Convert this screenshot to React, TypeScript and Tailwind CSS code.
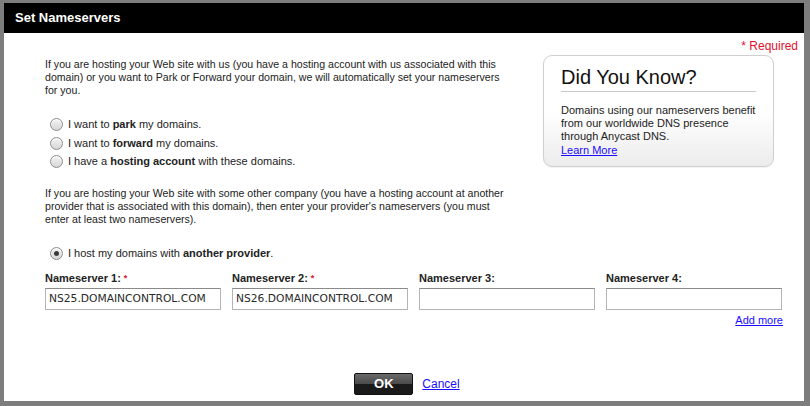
import React from "react";

function Radio({ checked = false }: { checked?: boolean }) {
  return (
    <span className="relative flex h-[13px] w-[13px] shrink-0 items-center justify-center rounded-full border border-[#8d8d8d] bg-gradient-to-b from-[#f4f4f4] to-[#d6d6d6] shadow-[inset_0_1px_1px_rgba(255,255,255,0.9)]">
      {checked && <span className="h-[5px] w-[5px] rounded-full bg-[#3a3a3a]" />}
    </span>
  );
}

function NsField({ label, required, value }: { label: string; required?: boolean; value?: string }) {
  return (
    <div className="flex w-[176px] flex-col">
      <div className="h-[16px] text-[11px] font-bold leading-[16px] text-[#222]">
        {label}
        {required && <span className="ml-[3px] align-top text-[9px] font-bold text-[#e0102d]">*</span>}
      </div>
      <div className="mt-[2px] flex h-[22px] items-center border border-[#b4b4b4] border-t-[#8a8a8a] bg-white px-[3px] text-[10.7px] font-['DejaVu_Sans',sans-serif] text-[#2a2a2a]">
        {value}
      </div>
    </div>
  );
}

export default function App() {
  return (
    <div className="relative h-[406px] w-[810px] overflow-hidden bg-[#7d7d7d] pl-[4px] pt-[3px] font-['Liberation_Sans',Arial,sans-serif]">
      <div className="flex h-[398px] w-[800px] flex-col bg-white">
        <div className="flex h-[30px] items-center bg-black px-[11px] text-[13px] font-bold text-white">
          Set Nameservers
        </div>
        <div className="flex flex-1 flex-col pr-[6px] pt-[6px]">
          <div className="h-[14px] text-right text-[12px] leading-[14px] text-[#e0102d]">* Required</div>
          <div className="mt-[2px] flex">
            <div className="w-[507px] pl-[41px] pt-[3px] text-[10.6px] leading-[13px] text-[#222]">
              <p>
                If you are hosting your Web site with us (you have a hosting account with us associated with this
                domain) or you want to Park or Forward your domain, we will automatically set your nameservers
                for you.
              </p>
              <div className="mt-[18px] flex flex-col pl-[5px] text-[11px]">
                <label className="flex h-[19px] items-center gap-[5px]">
                  <Radio />
                  <span>
                    I want to <b>park</b> my domains.
                  </span>
                </label>
                <label className="flex h-[18px] items-center gap-[5px]">
                  <Radio />
                  <span>
                    I want to <b>forward</b> my domains.
                  </span>
                </label>
                <label className="flex h-[19px] items-center gap-[5px]">
                  <Radio />
                  <span>
                    I have a <b>hosting account</b> with these domains.
                  </span>
                </label>
              </div>
              <p className="mt-[16px]">
                If you are hosting your Web site with some other company (you have a hosting account at another
                provider that is associated with this domain), then enter your provider's nameservers (you must
                enter at least two nameservers).
              </p>
              <label className="mt-[18px] flex h-[19px] items-center gap-[5px] pl-[5px] text-[11px]">
                <Radio checked />
                <span>
                  I host my domains with <b>another provider</b>.
                </span>
              </label>
            </div>
            <div className="ml-[32px] h-[112px] w-[231px] rounded-[9px] border border-[#cfcfcf] bg-gradient-to-b from-white via-white to-[#ececec] px-[17px] pt-[10px] shadow-[0_1px_1px_rgba(0,0,0,0.05)]">
              <div className="border-b border-[#c8c8c8] pb-[2px] text-[20px] leading-[23px] text-[#111]">
                Did You Know?
              </div>
              <div className="mt-[12px] text-[11px] leading-[13px] text-[#222]">
                Domains using our nameservers benefit from our worldwide DNS presence through Anycast DNS.
              </div>
              <a href="#" className="block w-fit text-[11px] leading-[14px] text-[#1a0dff] underline">
                Learn More
              </a>
            </div>
          </div>
          <div className="mt-[7px] flex gap-[11px] pl-[41px]">
            <NsField label="Nameserver 1:" required value="NS25.DOMAINCONTROL.COM" />
            <NsField label="Nameserver 2:" required value="NS26.DOMAINCONTROL.COM" />
            <NsField label="Nameserver 3:" />
            <NsField label="Nameserver 4:" />
          </div>
          <div className="mt-[3px] flex w-[779px] justify-end">
            <a href="#" className="text-[11px] leading-[14px] text-[#1a0dff] underline">
              Add more
            </a>
          </div>
          <div className="mt-[46px] flex items-center justify-center gap-[9px] pl-[12px]">
            <button className="relative flex h-[22px] w-[59px] items-center justify-center overflow-hidden rounded-[2px] border border-[#111] bg-gradient-to-b from-[#6a6a6a] via-[#4a4a4a] to-[#111] text-[13px] font-bold text-white">
              <span className="absolute inset-x-0 bottom-0 h-[10px] bg-[#1a1a1a]" />
              <span className="relative">OK</span>
            </button>
            <a href="#" className="text-[12px] text-[#1a0dff] underline">
              Cancel
            </a>
          </div>
        </div>
      </div>
    </div>
  );
}
